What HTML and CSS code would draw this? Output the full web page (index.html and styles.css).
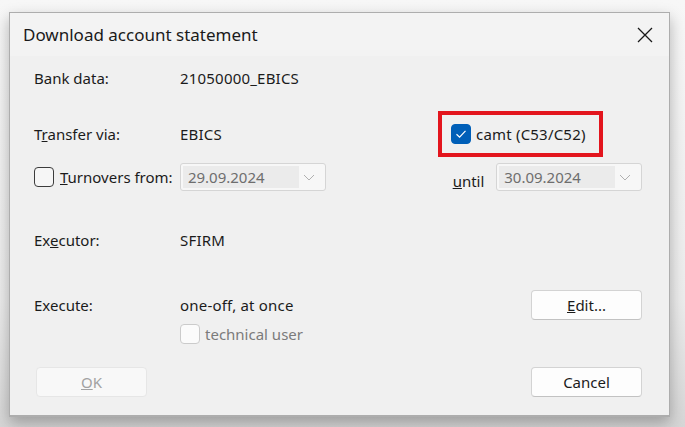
FILE: index.html
```html
<!DOCTYPE html>
<html lang="en">
<head>
	<meta charset="UTF-8">
	<title>Download account statement</title>
	<link rel="stylesheet" href="styles.css">
</head>
<body>
<div class="dialog">
	<div class="dialog-title">
		<span>Download account statement</span>
		<button class="close" aria-label="Close">
			<svg width="16" height="16" viewBox="0 0 16 16"><path d="M1 1L15 15M15 1L1 15" stroke="#1a1a1a" stroke-width="1.3" fill="none"/></svg>
		</button>
	</div>
	<div class="dialog-body">
		<div class="row row-bank">
			<span class="label">Bank data:</span>
			<span class="value">21050000_EBICS</span>
		</div>
		<div class="row row-transfer">
			<span class="label">T<u>r</u>ansfer via:</span>
			<span class="value">EBICS</span>
			<span class="highlight">
				<span class="check checked">
					<svg width="12" height="10" viewBox="0 0 12 10"><path d="M1.5 5.2L4.6 8.2L10.5 1.8" stroke="#fff" stroke-width="1.2" fill="none"/></svg>
				</span>
				<span class="check-text">camt (C53/C52)</span>
			</span>
		</div>
		<div class="row row-turnovers">
			<span class="check"></span>
			<span class="turn-label"><u>T</u>urnovers from:</span>
			<div class="combo">
				<span class="combo-text">29.09.2024</span>
				<svg class="combo-arrow" width="12" height="7" viewBox="0 0 12 7"><path d="M1 1L6 6L11 1" stroke="#b0b0b0" stroke-width="1" fill="none"/></svg>
			</div>
			<span class="until"><u>u</u>ntil</span>
			<div class="combo">
				<span class="combo-text">30.09.2024</span>
				<svg class="combo-arrow" width="12" height="7" viewBox="0 0 12 7"><path d="M1 1L6 6L11 1" stroke="#b0b0b0" stroke-width="1" fill="none"/></svg>
			</div>
		</div>
		<div class="row row-executor">
			<span class="label">Ex<u>e</u>cutor:</span>
			<span class="value">SFIRM</span>
		</div>
		<div class="row row-execute">
			<span class="label">Execute:</span>
			<span class="value">one-off, at once</span>
			<button class="btn"><u>E</u>dit...</button>
		</div>
		<div class="row row-tech">
			<span class="check disabled"></span>
			<span class="tech-text">technical user</span>
		</div>
		<div class="row row-buttons">
			<button class="btn btn-disabled"><u>O</u>K</button>
			<button class="btn">Cancel</button>
		</div>
	</div>
</div>
</body>
</html>
```

FILE: styles.css
```css
* {
	box-sizing: border-box;
}

body {
	margin: 0;
	width: 685px;
	height: 427px;
	overflow: hidden;
	background: linear-gradient(#f7f7f7, #ececec 70%, #d6d6d6);
	font-family: "Noto Sans", "Open Sans", sans-serif;
	font-size: 15px;
	color: #1b1b1b;
}

.dialog {
	width: 661px;
	height: 405px;
	margin: 12px 0 0 9px;
	background-color: #f0f0f0;
	border: 1px solid #adadad;
	border-bottom-width: 2px;
	box-shadow: 0 6px 14px rgba(0, 0, 0, 0.28);
}

.dialog-title {
	display: flex;
	align-items: center;
	justify-content: space-between;
	height: 43px;
	padding: 0 16px 0 13px;
	background-color: #f3f3f3;
	font-size: 17px;
	color: #1a1a1a;
}

.close {
	display: flex;
	padding: 0;
	margin-top: 0;
	border: none;
	background: none;
}

.dialog-body {
	padding: 0 27px 0 24px;
}

.row {
	display: flex;
	align-items: center;
}

.label {
	width: 146px;
}

.value {
	letter-spacing: 0.2px;
}

.row-bank {
	height: 28px;
	margin-top: 8px;
}

.row-transfer {
	height: 46px;
	margin-top: 19px;
}

.row-transfer .value {
	width: 258px;
}

.highlight {
	display: flex;
	align-items: center;
	height: 46px;
	width: 165px;
	padding-left: 9px;
	border: 4px solid #e3151d;
}

.check {
	display: flex;
	align-items: center;
	justify-content: center;
	width: 20px;
	height: 20px;
	border: 1px solid #3c3c3c;
	border-radius: 4px;
	background-color: #f6f6f6;
	flex-shrink: 0;
}

.check.checked {
	border-color: #005fb8;
	background-color: #005fb8;
}

.check.disabled {
	border-color: #cbcbcb;
	background-color: #fbfbfb;
}

.check-text {
	margin-left: 5px;
	letter-spacing: 0.2px;
}

.row-turnovers {
	height: 28px;
	margin-top: 6px;
}

.turn-label {
	width: 121px;
	margin-left: 6px;
}

.combo {
	display: flex;
	align-items: center;
	justify-content: space-between;
	width: 147px;
	height: 28px;
	padding: 2px 10px 2px 2px;
	border: 1px solid #d5d5d5;
	border-radius: 3px;
	background-color: #f7f7f7;
}

.combo-text {
	display: flex;
	align-items: center;
	height: 100%;
	width: 116px;
	padding-left: 5px;
	background-color: #ebebeb;
	color: #6e6e6e;
}

.until {
	width: 44px;
	margin-left: 127px;
	padding-top: 8px;
}

.row-executor {
	height: 28px;
	margin-top: 35px;
}

.row-execute {
	height: 30px;
	margin-top: 36px;
}

.row-execute .value {
	width: 351px;
}

.btn {
	width: 111px;
	height: 30px;
	padding: 0;
	font-family: inherit;
	font-size: 15px;
	color: #1b1b1b;
	border: 1px solid #d3d3d3;
	border-bottom-color: #c2c2c2;
	border-radius: 4px;
	background-color: #fdfdfd;
}

.btn-disabled {
	color: #a2a2a2;
	border-color: #e6e6e6;
	background-color: #f8f8f8;
}

.row-tech {
	height: 20px;
	margin-top: 4px;
	padding-left: 146px;
}

.tech-text {
	margin-left: 5px;
	color: #7b7b7b;
}

.row-buttons {
	justify-content: space-between;
	height: 30px;
	margin-top: 23px;
	margin-left: 2px;
}
```
